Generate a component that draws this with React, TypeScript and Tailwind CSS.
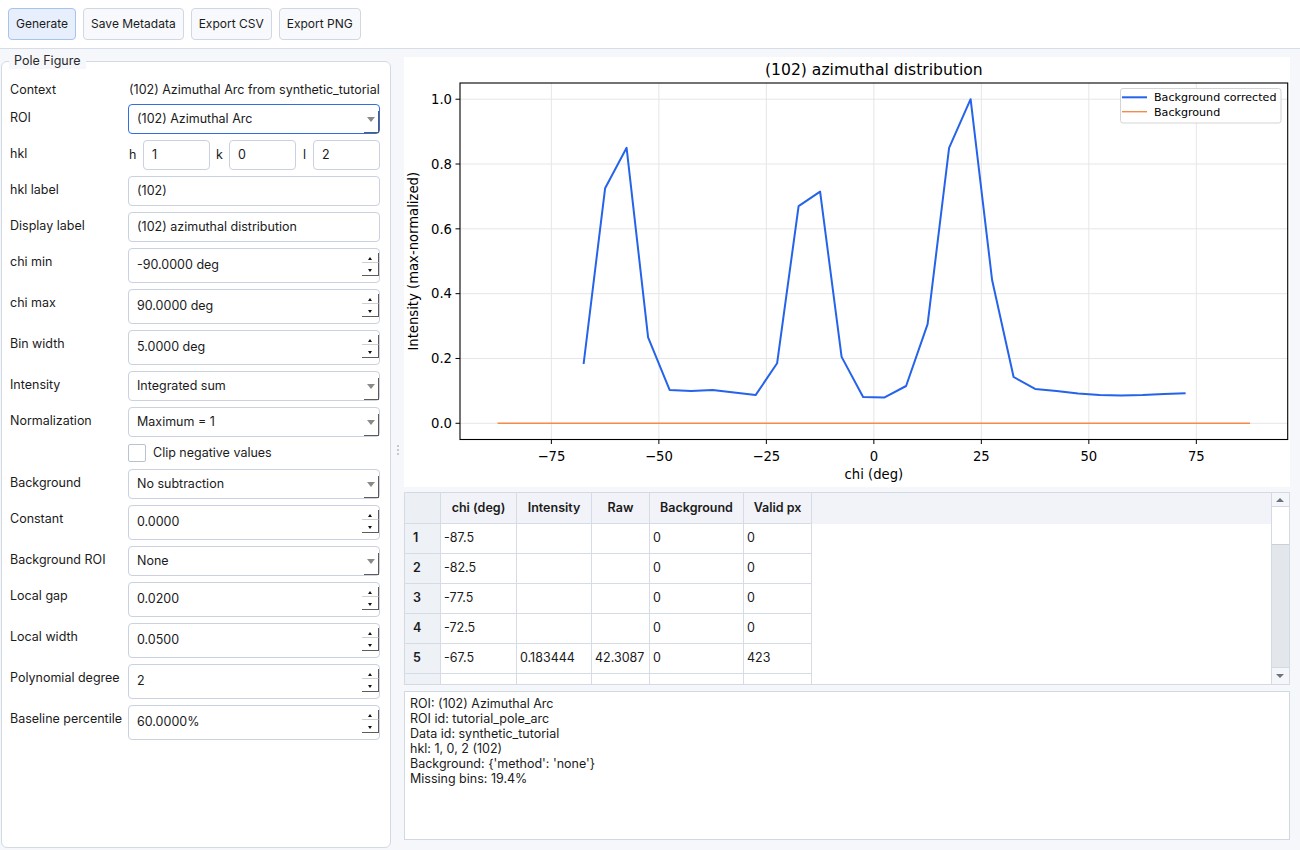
import React from "react";

const chis: number[] = [];
for (let c = -67.5; c <= 72.6; c += 5) chis.push(c);
const vals = [0.183, 0.725, 0.85, 0.265, 0.103, 0.1, 0.103, 0.095, 0.087, 0.185, 0.67, 0.715, 0.205, 0.081, 0.08, 0.115, 0.306, 0.85, 1.0, 0.442, 0.143, 0.106, 0.1, 0.092, 0.087, 0.086, 0.087, 0.09, 0.093];

const L = 56, R = 883.7, T = 26, B = 382.5;
const xs = (c: number) => L + (c + 96.25) * ((R - L) / 192.5);
const ys = (v: number) => T + (1.05 - v) * ((B - T) / 1.1);

function Chart() {
  const xt = [-75, -50, -25, 0, 25, 50, 75];
  const yt = [0, 0.2, 0.4, 0.6, 0.8, 1.0];
  const pts = chis.map((c, i) => `${xs(c).toFixed(1)},${ys(vals[i]).toFixed(1)}`).join(" ");
  const font = "DejaVu Sans, Liberation Sans, sans-serif";
  return (
    <div className="h-[430px] w-[886px] bg-white">
      <svg width="886" height="430" viewBox="0 0 886 430">
        {xt.map((t) => (
          <line key={"gx" + t} x1={xs(t)} x2={xs(t)} y1={T} y2={B} stroke="#e6e6e6" strokeWidth="1" />
        ))}
        {yt.map((t) => (
          <line key={"gy" + t} x1={L} x2={R} y1={ys(t)} y2={ys(t)} stroke="#e6e6e6" strokeWidth="1" />
        ))}
        <polyline points={`${xs(-87.5)},${ys(0)} ${xs(87.5)},${ys(0)}`} fill="none" stroke="#f68a48" strokeWidth="1.4" />
        <polyline points={pts} fill="none" stroke="#2563eb" strokeWidth="2" strokeLinejoin="round" />
        <rect x={L} y={T} width={R - L} height={B - T} fill="none" stroke="#000" strokeWidth="1.1" />
        {xt.map((t) => (
          <g key={"tx" + t}>
            <line x1={xs(t)} x2={xs(t)} y1={B} y2={B + 4.5} stroke="#000" strokeWidth="1" />
            <text x={xs(t)} y={B + 21} textAnchor="middle" fontFamily={font} fontSize="13.2" fill="#000">
              {t < 0 ? "\u2212" + Math.abs(t) : String(t)}
            </text>
          </g>
        ))}
        {yt.map((t) => (
          <g key={"ty" + t}>
            <line x1={L - 4.5} x2={L} y1={ys(t)} y2={ys(t)} stroke="#000" strokeWidth="1" />
            <text x={L - 8} y={ys(t) + 4.7} textAnchor="end" fontFamily={font} fontSize="13.2" fill="#000">
              {t.toFixed(1)}
            </text>
          </g>
        ))}
        <text x={(L + R) / 2} y={18} textAnchor="middle" fontFamily={font} fontSize="15.6" fill="#000">
          (102) azimuthal distribution
        </text>
        <text x={(L + R) / 2} y={422} textAnchor="middle" fontFamily={font} fontSize="13.2" fill="#000">
          chi (deg)
        </text>
        <text
          x={0}
          y={0}
          transform={`translate(14 ${(T + B) / 2}) rotate(-90)`}
          textAnchor="middle"
          fontFamily={font}
          fontSize="13.2"
          fill="#000"
        >
          Intensity (max-normalized)
        </text>
        <rect x={716.5} y={31.5} width={160.5} height={34.5} rx="2.5" fill="#ffffff" fillOpacity="0.85" stroke="#d4d4d4" strokeWidth="1" />
        <line x1={718} x2={743} y1={40.3} y2={40.3} stroke="#2563eb" strokeWidth="2" />
        <line x1={718} x2={743} y1={54.7} y2={54.7} stroke="#f68a48" strokeWidth="1.4" />
        <text x={750} y={44.2} fontFamily={font} fontSize="11.1" fill="#000">Background corrected</text>
        <text x={750} y={58.6} fontFamily={font} fontSize="11.1" fill="#000">Background</text>
      </svg>
    </div>
  );
}

function ComboArrow() {
  return (
    <div className="absolute right-0 top-[6px] bottom-0 w-[15px] border-r border-b border-[#5c5c5c]">
      <div className="absolute left-[3px] top-[6px] h-0 w-0 border-l-[4px] border-r-[4px] border-t-[5px] border-l-transparent border-r-transparent border-t-[#8a8a8a]" />
    </div>
  );
}

function Combo({ value, focused }: { value: string; focused?: boolean }) {
  return (
    <div
      className={
        "relative flex h-[30px] w-[252px] items-center rounded-[4px] border bg-white pl-[8px] text-[12.5px] text-[#1b1b1b] " +
        (focused ? "border-[#2f6fe4]" : "border-[#c9d2de]")
      }
    >
      {value}
      <ComboArrow />
    </div>
  );
}

function LineEdit({ value, w }: { value: string; w?: string }) {
  return (
    <div className={"flex h-[30px] items-center rounded-[4px] border border-[#c9d2de] bg-white pl-[8px] text-[12.5px] text-[#1b1b1b] " + (w ?? "w-[252px]")}>
      {value}
    </div>
  );
}

function Spin({ value }: { value: string }) {
  return (
    <div className="relative flex h-[35px] w-[252px] items-center rounded-[4px] border border-[#c9d2de] bg-white pl-[8px] text-[12.5px] text-[#1b1b1b]">
      {value}
      <div className="absolute right-0 top-[4px] flex h-[23px] w-[17px] flex-col">
        <div className="relative h-[10px] border-r border-b border-r-[#5c5c5c] border-b-[#d0d0d0]">
          <div className="absolute left-[6px] top-[4px] h-0 w-0 border-l-[2.5px] border-r-[2.5px] border-b-[3px] border-l-transparent border-r-transparent border-b-[#111]" />
        </div>
        <div className="relative flex-1 border-r border-b border-[#5c5c5c]">
          <div className="absolute left-[6px] top-[6px] h-0 w-0 border-l-[2.5px] border-r-[2.5px] border-t-[3px] border-l-transparent border-r-transparent border-t-[#111]" />
        </div>
      </div>
    </div>
  );
}

function Row({ label, children }: { label: string; children: React.ReactNode }) {
  return (
    <div className="flex items-start">
      <div className="w-[118px] pt-[6px] text-[12.5px] leading-[16px] text-[#1b1b1b]">{label}</div>
      {children}
    </div>
  );
}

const cols = [
  { name: "chi (deg)", w: "w-[76px]" },
  { name: "Intensity", w: "w-[75px]" },
  { name: "Raw", w: "w-[58px]" },
  { name: "Background", w: "w-[94px]" },
  { name: "Valid px", w: "w-[68px]" },
];

const rows = [
  ["1", "-87.5", "", "", "0", "0"],
  ["2", "-82.5", "", "", "0", "0"],
  ["3", "-77.5", "", "", "0", "0"],
  ["4", "-72.5", "", "", "0", "0"],
  ["5", "-67.5", "0.183444", "42.3087", "0", "423"],
  ["", "", "", "", "", ""],
];

function Table() {
  return (
    <div className="mt-[5px] flex h-[193px] overflow-hidden border border-[#d3dae4] bg-white">
      <div className="flex flex-1 flex-col overflow-hidden">
        <div className="flex h-[31px] shrink-0 bg-[#f1f3f8] text-[12.5px] font-semibold text-[#1b1b1b]">
          <div className="h-full w-[36px] border-r border-b border-[#d6dce5] bg-[#eceff4]" />
          {cols.map((c) => (
            <div key={c.name} className={"flex h-full items-center justify-center border-r border-b border-[#d6dce5] " + c.w}>
              {c.name}
            </div>
          ))}
          <div className="h-full flex-1" />
        </div>
        {rows.map((r, i) => (
          <div key={i} className="flex h-[30px] shrink-0 text-[12.5px] text-[#1b1b1b]">
            <div className="flex h-full w-[36px] items-center border-r border-b border-[#d6dce5] bg-[#eef1f6] pl-[8px] font-semibold">
              {r[0]}
            </div>
            {cols.map((c, j) => (
              <div key={j} className={"flex h-full items-center border-r border-b border-[#d6dce5] pl-[3px] " + c.w}>
                {r[j + 1]}
              </div>
            ))}
          </div>
        ))}
      </div>
      <div className="flex w-[18px] flex-col border-l border-[#d3dae4] bg-[#f4f6f9]">
        <div className="relative h-[14px] border-b border-[#d3dae4]">
          <div className="absolute left-[4px] top-[5px] h-0 w-0 border-l-[4px] border-r-[4px] border-b-[4px] border-l-transparent border-r-transparent border-b-[#6b7280]" />
        </div>
        <div className="h-[38px] border-b border-[#c9d0da] bg-white" />
        <div className="flex-1 bg-[#e3e6eb]" />
        <div className="relative h-[17px] border-t border-[#d3dae4]">
          <div className="absolute left-[4px] top-[6px] h-0 w-0 border-l-[4px] border-r-[4px] border-t-[4px] border-l-transparent border-r-transparent border-t-[#6b7280]" />
        </div>
      </div>
    </div>
  );
}

export default function App() {
  const btn = "flex h-[32px] items-center rounded-[4px] border px-[7px] text-[12px] text-[#1b1b1b]";
  return (
    <div className="flex h-[850px] w-[1300px] flex-col overflow-hidden bg-[#f5f7fb] font-['Inter',sans-serif]">
      <div className="flex h-[49px] shrink-0 items-center gap-[7px] border-b border-[#d5dde9] bg-white px-[8px]">
        <div className={btn + " border-[#a9c3ef] bg-[#e7effd]"}>Generate</div>
        <div className={btn + " border-[#d0d8e3] bg-[#f7f9fc]"}>Save Metadata</div>
        <div className={btn + " border-[#d0d8e3] bg-[#f7f9fc]"}>Export CSV</div>
        <div className={btn + " border-[#d0d8e3] bg-[#f7f9fc]"}>Export PNG</div>
      </div>
      <div className="flex flex-1 overflow-hidden">
        <div className="relative ml-[1px] mt-[12px] mb-[2px] w-[390px] shrink-0 rounded-[6px] border border-[#d3dae4] bg-white">
          <div className="absolute -top-[9px] left-[7px] bg-[#f5f7fb] px-[5px] text-[12.5px] leading-[16px] text-[#2a2a2a]">Pole Figure</div>
          <div className="flex flex-col gap-[6px] pl-[8px] pt-[20px]">
            <div className="flex h-[16px] items-center text-[12.5px] text-[#1b1b1b]">
              <div className="w-[118px]">Context</div>
              <div className="pl-[1px]">(102) Azimuthal Arc from synthetic_tutorial</div>
            </div>
            <Row label="ROI">
              <Combo value="(102) Azimuthal Arc" focused />
            </Row>
            <Row label="hkl">
              <div className="flex w-[252px] items-center text-[12.5px] text-[#1b1b1b]">
                <div className="w-[15px] pl-[1px]">h</div>
                <LineEdit value="1" w="w-[67px]" />
                <div className="w-[19px] pl-[6px]">k</div>
                <LineEdit value="0" w="w-[67px]" />
                <div className="w-[17px] pl-[7px]">l</div>
                <LineEdit value="2" w="w-[67px]" />
              </div>
            </Row>
            <Row label="hkl label">
              <LineEdit value="(102)" />
            </Row>
            <Row label="Display label">
              <LineEdit value="(102) azimuthal distribution" />
            </Row>
            <Row label="chi min">
              <Spin value="-90.0000 deg" />
            </Row>
            <Row label="chi max">
              <Spin value="90.0000 deg" />
            </Row>
            <Row label="Bin width">
              <Spin value="5.0000 deg" />
            </Row>
            <Row label="Intensity">
              <Combo value="Integrated sum" />
            </Row>
            <Row label="Normalization">
              <Combo value="Maximum = 1" />
            </Row>
            <div className="flex h-[20px] items-center">
              <div className="w-[118px]" />
              <div className="h-[18px] w-[18px] rounded-[2px] border border-[#b9c2ce] bg-white" />
              <div className="pl-[7px] text-[12.5px] text-[#1b1b1b]">Clip negative values</div>
            </div>
            <Row label="Background">
              <Combo value="No subtraction" />
            </Row>
            <Row label="Constant">
              <Spin value="0.0000" />
            </Row>
            <Row label="Background ROI">
              <Combo value="None" />
            </Row>
            <Row label="Local gap">
              <Spin value="0.0200" />
            </Row>
            <Row label="Local width">
              <Spin value="0.0500" />
            </Row>
            <Row label="Polynomial degree">
              <Spin value="2" />
            </Row>
            <Row label="Baseline percentile">
              <Spin value="60.0000%" />
            </Row>
          </div>
        </div>
        <div className="flex w-[13px] shrink-0 flex-col items-center justify-center gap-[2px]">
          <div className="h-[2px] w-[2px] bg-[#c4cad3]" />
          <div className="h-[2px] w-[2px] bg-[#c4cad3]" />
          <div className="h-[2px] w-[2px] bg-[#c4cad3]" />
        </div>
        <div className="flex w-[886px] shrink-0 flex-col pt-[8px]">
          <Chart />
          <Table />
          <div className="mt-[6px] h-[149px] border border-[#d0d8e3] bg-white px-[5px] pt-[4px] text-[12.5px] leading-[15px] text-[#1b1b1b]">
            <div>ROI: (102) Azimuthal Arc</div>
            <div>ROI id: tutorial_pole_arc</div>
            <div>Data id: synthetic_tutorial</div>
            <div>hkl: 1, 0, 2 (102)</div>
            <div>Background: {"{'method': 'none'}"}</div>
            <div>Missing bins: 19.4%</div>
          </div>
        </div>
      </div>
    </div>
  );
}
